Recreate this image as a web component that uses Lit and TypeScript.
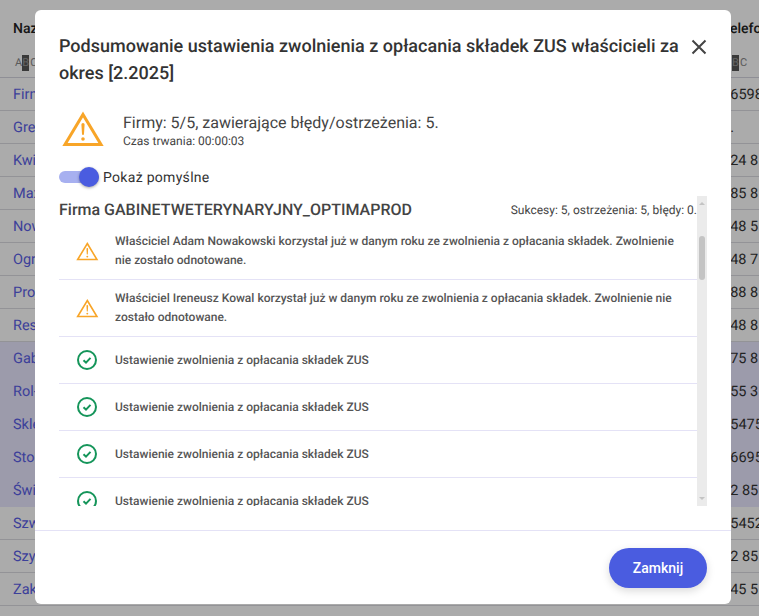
import { LitElement, html, css, svg } from "lit";
import { customElement } from "lit/decorators.js";

const rows: [string, string, boolean][] = [
  ["Firma", "+6598", false], ["Grener", "1.", false], ["Kwiaty", "124 8", false], ["Maxbud", "185 8", false],
  ["Nowak", "148 5", false], ["Ogrody", "148 7", false], ["Projekt", "188 8", false], ["Restauracja", "148 8", false],
  ["Gabinet", "175 8", true], ["Rol-Mar", "155 3", true], ["Sklep", "+5475", true], ["Stolarnia", "+6695", true],
  ["Świat", "12 85", true], ["Szwalnia", "+5452", false], ["Szyby", "12 85", false], ["Zakład", "145 5", false],
];

const warn = svg`<path d="M23 6.5L41 36.5H5Z" fill="none" stroke="#f8a528" stroke-width="3"/><path fill="#f8a528" d="M21.4 16.5a1.6 1.6 0 0 1 3.2 0l-.6 9.5a1 1 0 0 1-2 0zM23 29.2a1.8 1.8 0 1 1 0 3.6a1.8 1.8 0 1 1 0-3.6z"/>`;

const items = [
  { w: true, t: "Właściciel Adam Nowakowski korzystał już w danym roku ze zwolnienia z opłacania składek. Zwolnienie nie zostało odnotowane." },
  { w: true, t: "Właściciel Ireneusz Kowal korzystał już w danym roku ze zwolnienia z opłacania składek. Zwolnienie nie zostało odnotowane." },
  { w: false, t: "Ustawienie zwolnienia z opłacania składek ZUS" },
  { w: false, t: "Ustawienie zwolnienia z opłacania składek ZUS" },
  { w: false, t: "Ustawienie zwolnienia z opłacania składek ZUS" },
  { w: false, t: "Ustawienie zwolnienia z opłacania składek ZUS" },
];

@customElement("app-root")
export class AppRoot extends LitElement {
  static styles = css`
    :host { display: block; position: relative; width: 759px; height: 616px; overflow: hidden; background: #fff; font-family: Roboto, sans-serif; color: #333; text-rendering: geometricPrecision; }
    .table { display: flex; flex-direction: column; }
    .head { display: grid; grid-template-columns: 722px 1fr; height: 78px; box-sizing: border-box; border-bottom: 1px solid #d6d6e0; }
    .hcell { display: flex; flex-direction: column; padding-left: 13px; padding-top: 20px; font-size: 14px; font-weight: 500; color: #222; line-height: 18px; white-space: nowrap; }
    .hcell.r { padding-left: 0; }
    .abc { display: flex; margin-top: 17px; font-size: 11px; font-weight: 400; color: #888; line-height: 16px; padding-left: 2px; }
    .abc b { width: 7px; margin: 0 1px 0 0; text-align: center; font-weight: 400; background: #555; color: #999; }
    .abc.r { padding-left: 10px; }
    .row { display: grid; grid-template-columns: 722px 1fr; height: 33px; box-sizing: border-box; border-bottom: 1px solid #dcdce2; align-items: center; font-size: 14.5px; white-space: nowrap; overflow: hidden; }
    .row.sel { background: #e9e7ff; border-bottom-color: #e9e7ff; }
    .name { padding-left: 13px; color: #5a60e6; }
    .tel { color: #333; }
    .backdrop { position: absolute; inset: 0; background: rgba(0, 0, 0, .33); }
    .dialog { position: absolute; left: 35px; top: 10px; width: 696px; height: 594px; background: #fff; border-radius: 6px; display: flex; flex-direction: column; box-sizing: border-box; }
    .top { display: flex; padding: 24px 24px 0; justify-content: space-between; }
    h1 { margin: 0; width: 628px; font-size: 18px; font-weight: 500; line-height: 26.5px; color: #333; }
    .close { width: 16px; height: 16px; margin-top: 5px; margin-right: 0; flex: none; }
    .summary { display: flex; align-items: center; gap: 17px; margin: 21px 0 0 25px; height: 46px; }
    .summary svg { width: 46px; height: 46px; flex: none; }
    .sum1 { font-size: 16px; line-height: 20px; color: #444; }
    .sum2 { font-size: 12px; line-height: 16px; color: #444; }
    .toggle { display: flex; align-items: center; margin: 11px 0 0 24px; height: 24px; gap: 4px; font-size: 14px; color: #333; letter-spacing: .3px; }
    .toggle span { padding-top: 1px; }
    .track { position: relative; width: 40px; height: 12px; border-radius: 6px; background: #a7b0f0; }
    .thumb { position: absolute; right: 0; top: -4px; width: 20px; height: 20px; border-radius: 50%; background: #4a5ce0; box-shadow: 0 1px 3px rgba(0,0,0,.35); }
    .body { display: flex; margin: 7px 24px 0; height: 310px; }
    .list { flex: 1; min-width: 0; overflow: hidden; }
    .lhead { display: flex; justify-content: space-between; align-items: center; height: 27px; }
    .lhead .f { font-size: 16px; font-weight: 500; color: #444; }
    .lhead .s { font-size: 12px; color: #444; }
    .item { display: flex; align-items: center; box-sizing: border-box; min-height: 47px; padding: 9px 0; border-bottom: 1px solid #e4e2f6; font-size: 12px; font-weight: 500; line-height: 19px; color: #555; }
    .ic { width: 56px; flex: none; display: flex; justify-content: center; }
    .ic svg { width: 24.6px; height: 22.5px; display: block; }
    .ic svg.ok { width: 24px; height: 24px; }
    .txt { flex: 1; padding-right: 18px; }
    .bar { position: relative; width: 10px; flex: none; background: #ebebeb; }
    .bar i { position: absolute; left: 2px; top: 40px; width: 6px; height: 44px; border-radius: 3px; background: #c4c4c4; }
    .bar u { position: absolute; left: 2px; width: 0; height: 0; border-left: 3px solid transparent; border-right: 3px solid transparent; }
    .bar .up { top: 6px; border-bottom: 3px solid #c4c4c4; }
    .bar .dn { bottom: 6px; border-top: 3px solid #c4c4c4; }
    .foot { margin-top: 24px; border-top: 1px solid #e4e2f6; flex: 1; display: flex; justify-content: flex-end; align-items: flex-start; padding: 17px 24px 0; }
    button { width: 98px; height: 40px; border: 0; border-radius: 20px; background: #4a5ce0; color: #fff; font: 500 14px Roboto, sans-serif; box-shadow: 0 3px 8px rgba(0,0,0,.15); }
  `;

  render() {
    return html`
      <div class="table">
        <div class="head">
          <div class="hcell">Nazwa<div class="abc">A<b>B</b>C</div></div>
          <div class="hcell r">Telefon<div class="abc r"><b>B</b>C</div></div>
        </div>
        ${rows.map(([n, t, s]) => html`<div class="row ${s ? "sel" : ""}"><div class="name">${n}</div><div class="tel">${t}</div></div>`)}
      </div>
      <div class="backdrop"></div>
      <div class="dialog">
        <div class="top">
          <h1>Podsumowanie ustawienia zwolnienia z opłacania składek ZUS właścicieli za okres [2.2025]</h1>
          <svg class="close" viewBox="0 0 16 16"><path d="M1.5 1.5l13 13M14.5 1.5l-13 13" stroke="#444" stroke-width="2" fill="none"/></svg>
        </div>
        <div class="summary">
          <svg viewBox="0 0 46 46">${warn}</svg>
          <div>
            <div class="sum1">Firmy: 5/5, zawierające błędy/ostrzeżenia: 5.</div>
            <div class="sum2">Czas trwania: 00:00:03</div>
          </div>
        </div>
        <div class="toggle"><div class="track"><div class="thumb"></div></div><span>Pokaż pomyślne</span></div>
        <div class="body">
          <div class="list">
            <div class="lhead"><span class="f">Firma GABINETWETERYNARYJNY_OPTIMAPROD</span><span class="s">Sukcesy: 5, ostrzeżenia: 5, błędy: 0.</span></div>
            ${items.map((i) => html`
              <div class="item">
                <div class="ic">${i.w
                  ? html`<svg viewBox="0 0 46 42">${warn}</svg>`
                  : html`<svg class="ok" viewBox="0 0 24 24"><circle cx="12" cy="12" r="9" fill="none" stroke="#15955a" stroke-width="2"/><path d="M8.5 12.3l2.5 2.4 4.5-4.8" fill="none" stroke="#15955a" stroke-width="2"/></svg>`}</div>
                <div class="txt">${i.t}</div>
              </div>`)}
          </div>
          <div class="bar"><u class="up"></u><i></i><u class="dn"></u></div>
        </div>
        <div class="foot"><button>Zamknij</button></div>
      </div>
    `;
  }
}
